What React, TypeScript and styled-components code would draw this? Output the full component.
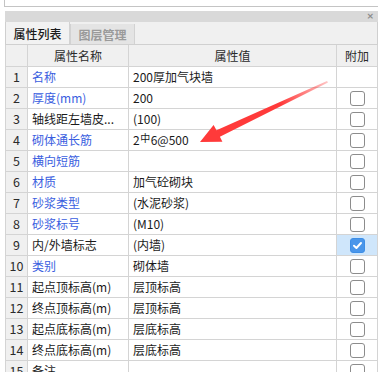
import React from "react";
import styled, { createGlobalStyle } from "styled-components";

const Global = createGlobalStyle`
  html, body { margin: 0; padding: 0; background: #ffffff; }
  body {
    font-family: "Noto Sans CJK SC", "Noto Sans", sans-serif;
    font-size: 12px;
    color: #1a1a1a;
    overflow: hidden;
  }
`;

const Page = styled.div`
  position: relative;
  width: 378px;
  height: 372px;
  overflow: hidden;
  background: #ffffff;
`;

const TopStrip = styled.div`
  box-sizing: border-box;
  height: 7px;
  margin-left: 4px;
  border-left: 1px solid #c4c4c4;
  border-bottom: 1px solid #c4c4c4;
  background: #ffffff;
`;

const Panel = styled.div`
  margin-top: 4px;
  margin-left: 5px;
  width: 373px;
  display: flex;
  flex-direction: column;
`;

const TitleBar = styled.div`
  height: 11px;
  background: #d9d9d9;
  display: flex;
  align-items: center;
  justify-content: flex-end;
  padding-right: 4px;
`;

const CloseMark = styled.span`
  font-family: "DejaVu Sans", sans-serif;
  font-size: 9px;
  line-height: 9px;
  color: #8c8c8c;
  font-weight: bold;
`;

const TabBar = styled.div`
  height: 22px;
  background: #f0f0f0;
  display: flex;
  align-items: flex-end;
  border-left: 1px solid #cfcfcf;
  border-right: 1px solid #cfcfcf;
`;

const Tab = styled.div<{ $active?: boolean }>`
  box-sizing: border-box;
  width: ${(p) => (p.$active ? "64px" : "65px")};
  height: ${(p) => (p.$active ? "22px" : "20px")};
  display: flex;
  align-items: center;
  justify-content: center;
  font-size: 12px;
  background: ${(p) => (p.$active ? "#f2f2f2" : "#e4e4e4")};
  color: ${(p) => (p.$active ? "#1a1a1a" : "#9a9a9a")};
  font-weight: ${(p) => (p.$active ? 500 : 700)};
  border-left: ${(p) => (p.$active ? "none" : "1px solid #d2d2d2")};
  border-right: 1px solid #d2d2d2;
`;

const Table = styled.div`
  display: flex;
  flex-direction: column;
`;

const Row = styled.div<{ $header?: boolean }>`
  box-sizing: border-box;
  display: grid;
  grid-template-columns: 22px 101px 208px 42px;
  height: ${(p) => (p.$header ? "23px" : "21px")};
  border-top: ${(p) => (p.$header ? "1px solid #d0d0d0" : "none")};
  border-bottom: 1px solid #d4d4d4;
  background: ${(p) => (p.$header ? "#f0f0f0" : "#ffffff")};
`;

const Cell = styled.div<{ $align?: "left" | "center"; $bg?: string; $color?: string; $last?: boolean }>`
  box-sizing: border-box;
  display: flex;
  align-items: center;
  justify-content: ${(p) => (p.$align === "center" ? "center" : "flex-start")};
  padding-left: ${(p) => (p.$align === "center" ? "0" : "4px")};
  border-left: 1px solid #d4d4d4;
  border-right: ${(p) => (p.$last ? "1px solid #d4d4d4" : "none")};
  background: ${(p) => p.$bg || "transparent"};
  color: ${(p) => p.$color || "#1a1a1a"};
  white-space: nowrap;
  overflow: hidden;
  font-size: 12px;
  line-height: 20px;
`;

const NumCell = styled(Cell)`
  background: #f0f0f0;
  color: #2a2a2a;
  font-size: 12.5px;
`;

const HeadCell = styled(Cell)`
  color: #2a2a2a;
`;

const Check = styled.div<{ $checked?: boolean }>`
  box-sizing: border-box;
  width: 15px;
  height: 15px;
  border-radius: 3px;
  border: 1px solid ${(p) => (p.$checked ? "#3d8ee6" : "#8c8c8c")};
  background: ${(p) => (p.$checked ? "#4a96ea" : "#ffffff")};
  display: flex;
  align-items: center;
  justify-content: center;
`;

const ArrowLayer = styled.svg`
  position: absolute;
  left: 0;
  top: 0;
  pointer-events: none;
`;

type Item = { name: string; value: string; blue?: boolean; check?: "none" | "off" | "on" };

const items: Item[] = [
  { name: "名称", value: "200厚加气块墙", blue: true, check: "none" },
  { name: "厚度(mm)", value: "200", blue: true },
  { name: "轴线距左墙皮...", value: "(100)" },
  { name: "砌体通长筋", value: "2中6@500", blue: true },
  { name: "横向短筋", value: "", blue: true },
  { name: "材质", value: "加气砼砌块", blue: true },
  { name: "砂浆类型", value: "(水泥砂浆)", blue: true },
  { name: "砂浆标号", value: "(M10)", blue: true },
  { name: "内/外墙标志", value: "(内墙)", check: "on" },
  { name: "类别", value: "砌体墙", blue: true },
  { name: "起点顶标高(m)", value: "层顶标高" },
  { name: "终点顶标高(m)", value: "层顶标高" },
  { name: "起点底标高(m)", value: "层底标高" },
  { name: "终点底标高(m)", value: "层底标高" },
  { name: "备注", value: "" },
];

const renderValue = (v: string) => {
  if (v.includes("中")) {
    const [a, b] = v.split("中");
    return (
      <>
        {a}
        <Small>中</Small>
        {b}
      </>
    );
  }
  return v;
};

const Small = styled.span`
  font-size: 10px;
  position: relative;
  top: -2px;
  margin: 0 0.5px;
`;

export default function App() {
  return (
    <Page>
      <Global />
      <TopStrip />
      <Panel>
        <TitleBar>
          <CloseMark>×</CloseMark>
        </TitleBar>
        <TabBar>
          <Tab $active>属性列表</Tab>
          <Tab>图层管理</Tab>
        </TabBar>
        <Table>
          <Row $header>
            <NumCell $align="center" />
            <HeadCell $align="center">属性名称</HeadCell>
            <HeadCell $align="center">属性值</HeadCell>
            <HeadCell $align="center" $last>附加</HeadCell>
          </Row>
          {items.map((it, i) => {
            const check = it.check || "off";
            return (
              <Row key={i}>
                <NumCell $align="center">{i + 1}</NumCell>
                <Cell $color={it.blue ? "#3a5ee0" : "#1a1a1a"}>{it.name}</Cell>
                <Cell>{renderValue(it.value)}</Cell>
                <Cell $align="center" $last $bg={check === "on" ? "#cfe6fb" : undefined}>
                  {check !== "none" && (
                    <Check $checked={check === "on"}>
                      {check === "on" && (
                        <svg width="11" height="11" viewBox="0 0 11 11">
                          <path d="M2 5.8 L4.4 8 L9 3" fill="none" stroke="#ffffff" strokeWidth="2" strokeLinecap="round" strokeLinejoin="round" />
                        </svg>
                      )}
                    </Check>
                  )}
                </Cell>
              </Row>
            );
          })}
        </Table>
      </Panel>
      <ArrowLayer width="378" height="372" viewBox="0 0 378 372">
        <defs>
          <linearGradient id="tailFade" x1="327" y1="81" x2="280" y2="103" gradientUnits="userSpaceOnUse">
            <stop offset="0" stopColor="#ff3a3a" stopOpacity="0.3" />
            <stop offset="1" stopColor="#ff3a3a" stopOpacity="1" />
          </linearGradient>
        </defs>
        <polygon
          points="327,81 216.5,130.2 213.6,125 200,142 222.4,141.8 219.9,136.8 328,82.5"
          fill="url(#tailFade)"
        />
      </ArrowLayer>
    </Page>
  );
}
